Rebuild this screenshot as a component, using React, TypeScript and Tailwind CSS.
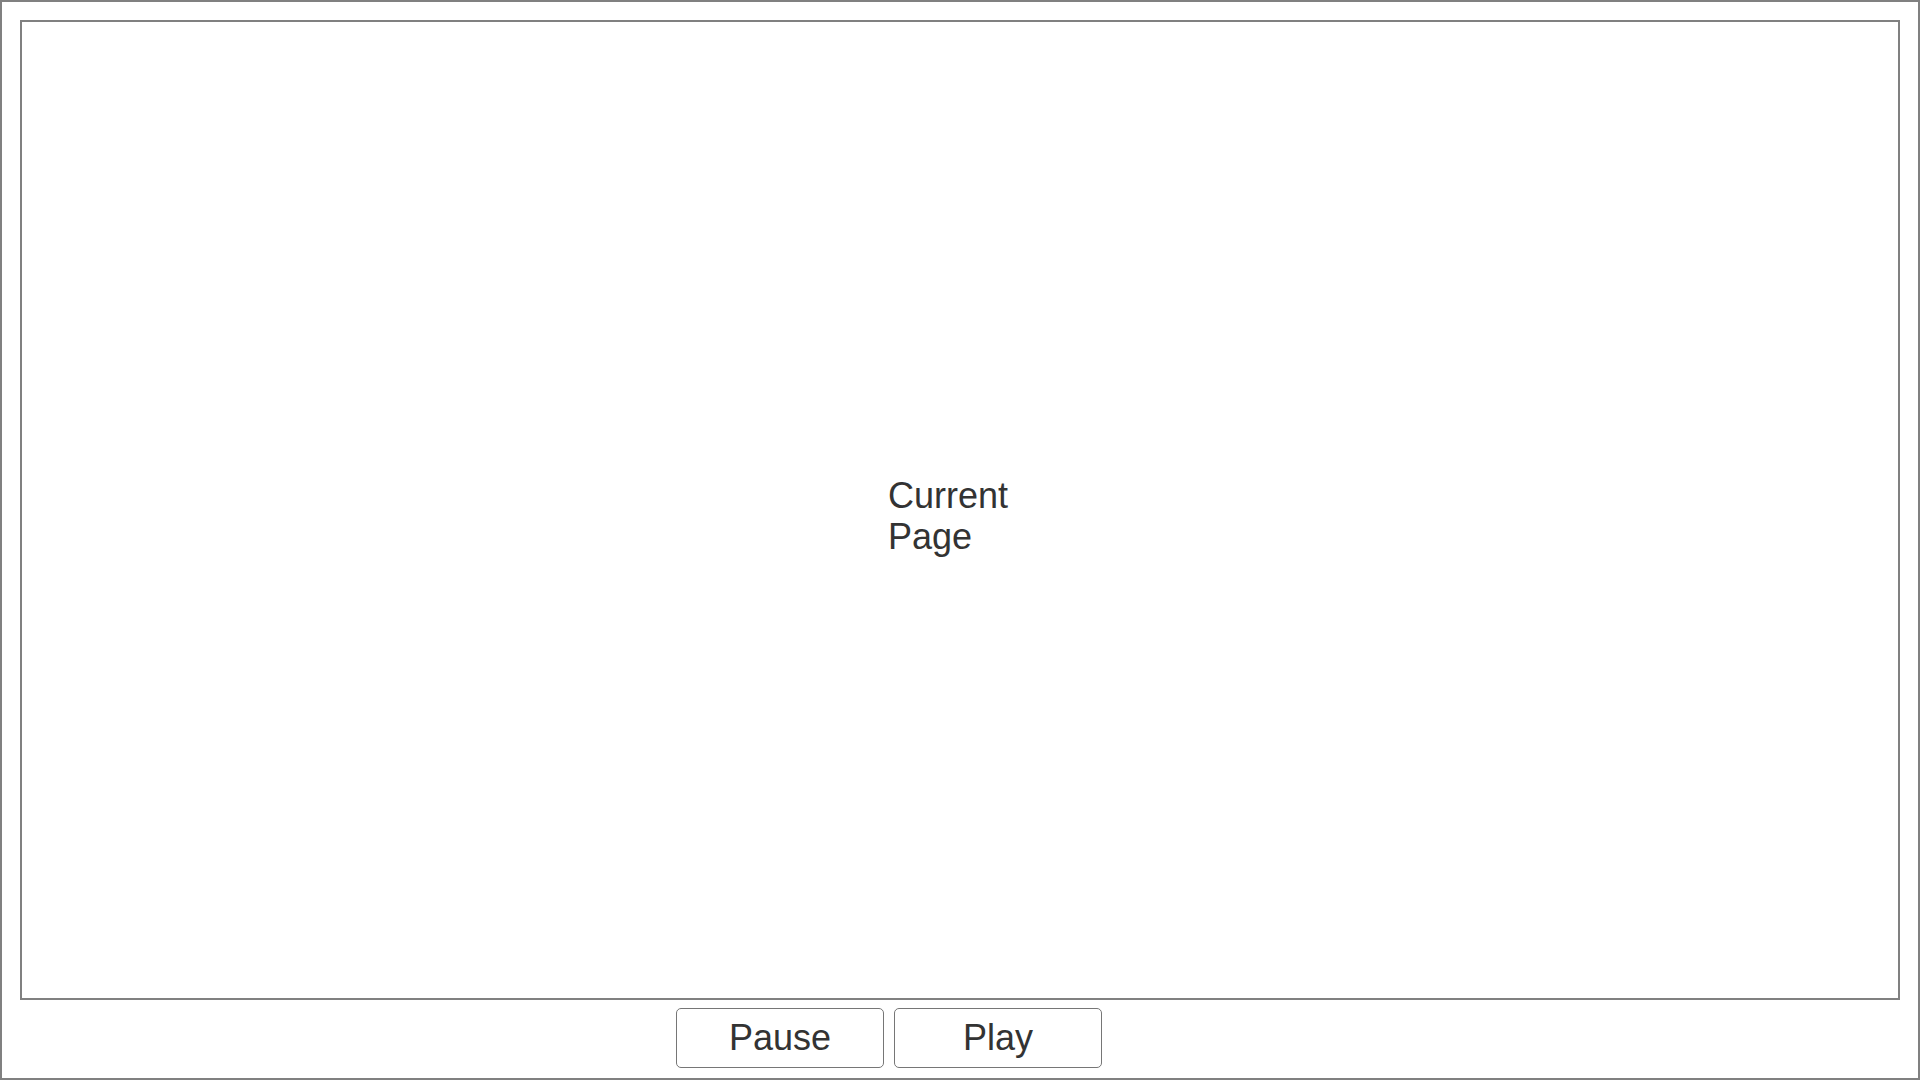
export default function App() {
  return (
    <div className="w-[1920px] h-[1080px] border-2 border-[#808080] bg-white flex flex-col px-[18px] pt-[18px] text-[#333333] font-['Liberation_Sans',Arial,sans-serif]">
      <div className="h-[980px] border-2 border-[#808080] flex items-center justify-center">
        <div className="w-[144px] pt-[12px] text-[36px] leading-[41px]">Current Page</div>
      </div>
      <div className="flex gap-[10px] pl-[656px] pt-[8px]">
        <button className="w-[208px] h-[60px] border border-[#767676] rounded-[5px] bg-white text-[36px] leading-none text-[#333333]">
          Pause
        </button>
        <button className="w-[208px] h-[60px] border border-[#767676] rounded-[5px] bg-white text-[36px] leading-none text-[#333333]">
          Play
        </button>
      </div>
    </div>
  );
}
